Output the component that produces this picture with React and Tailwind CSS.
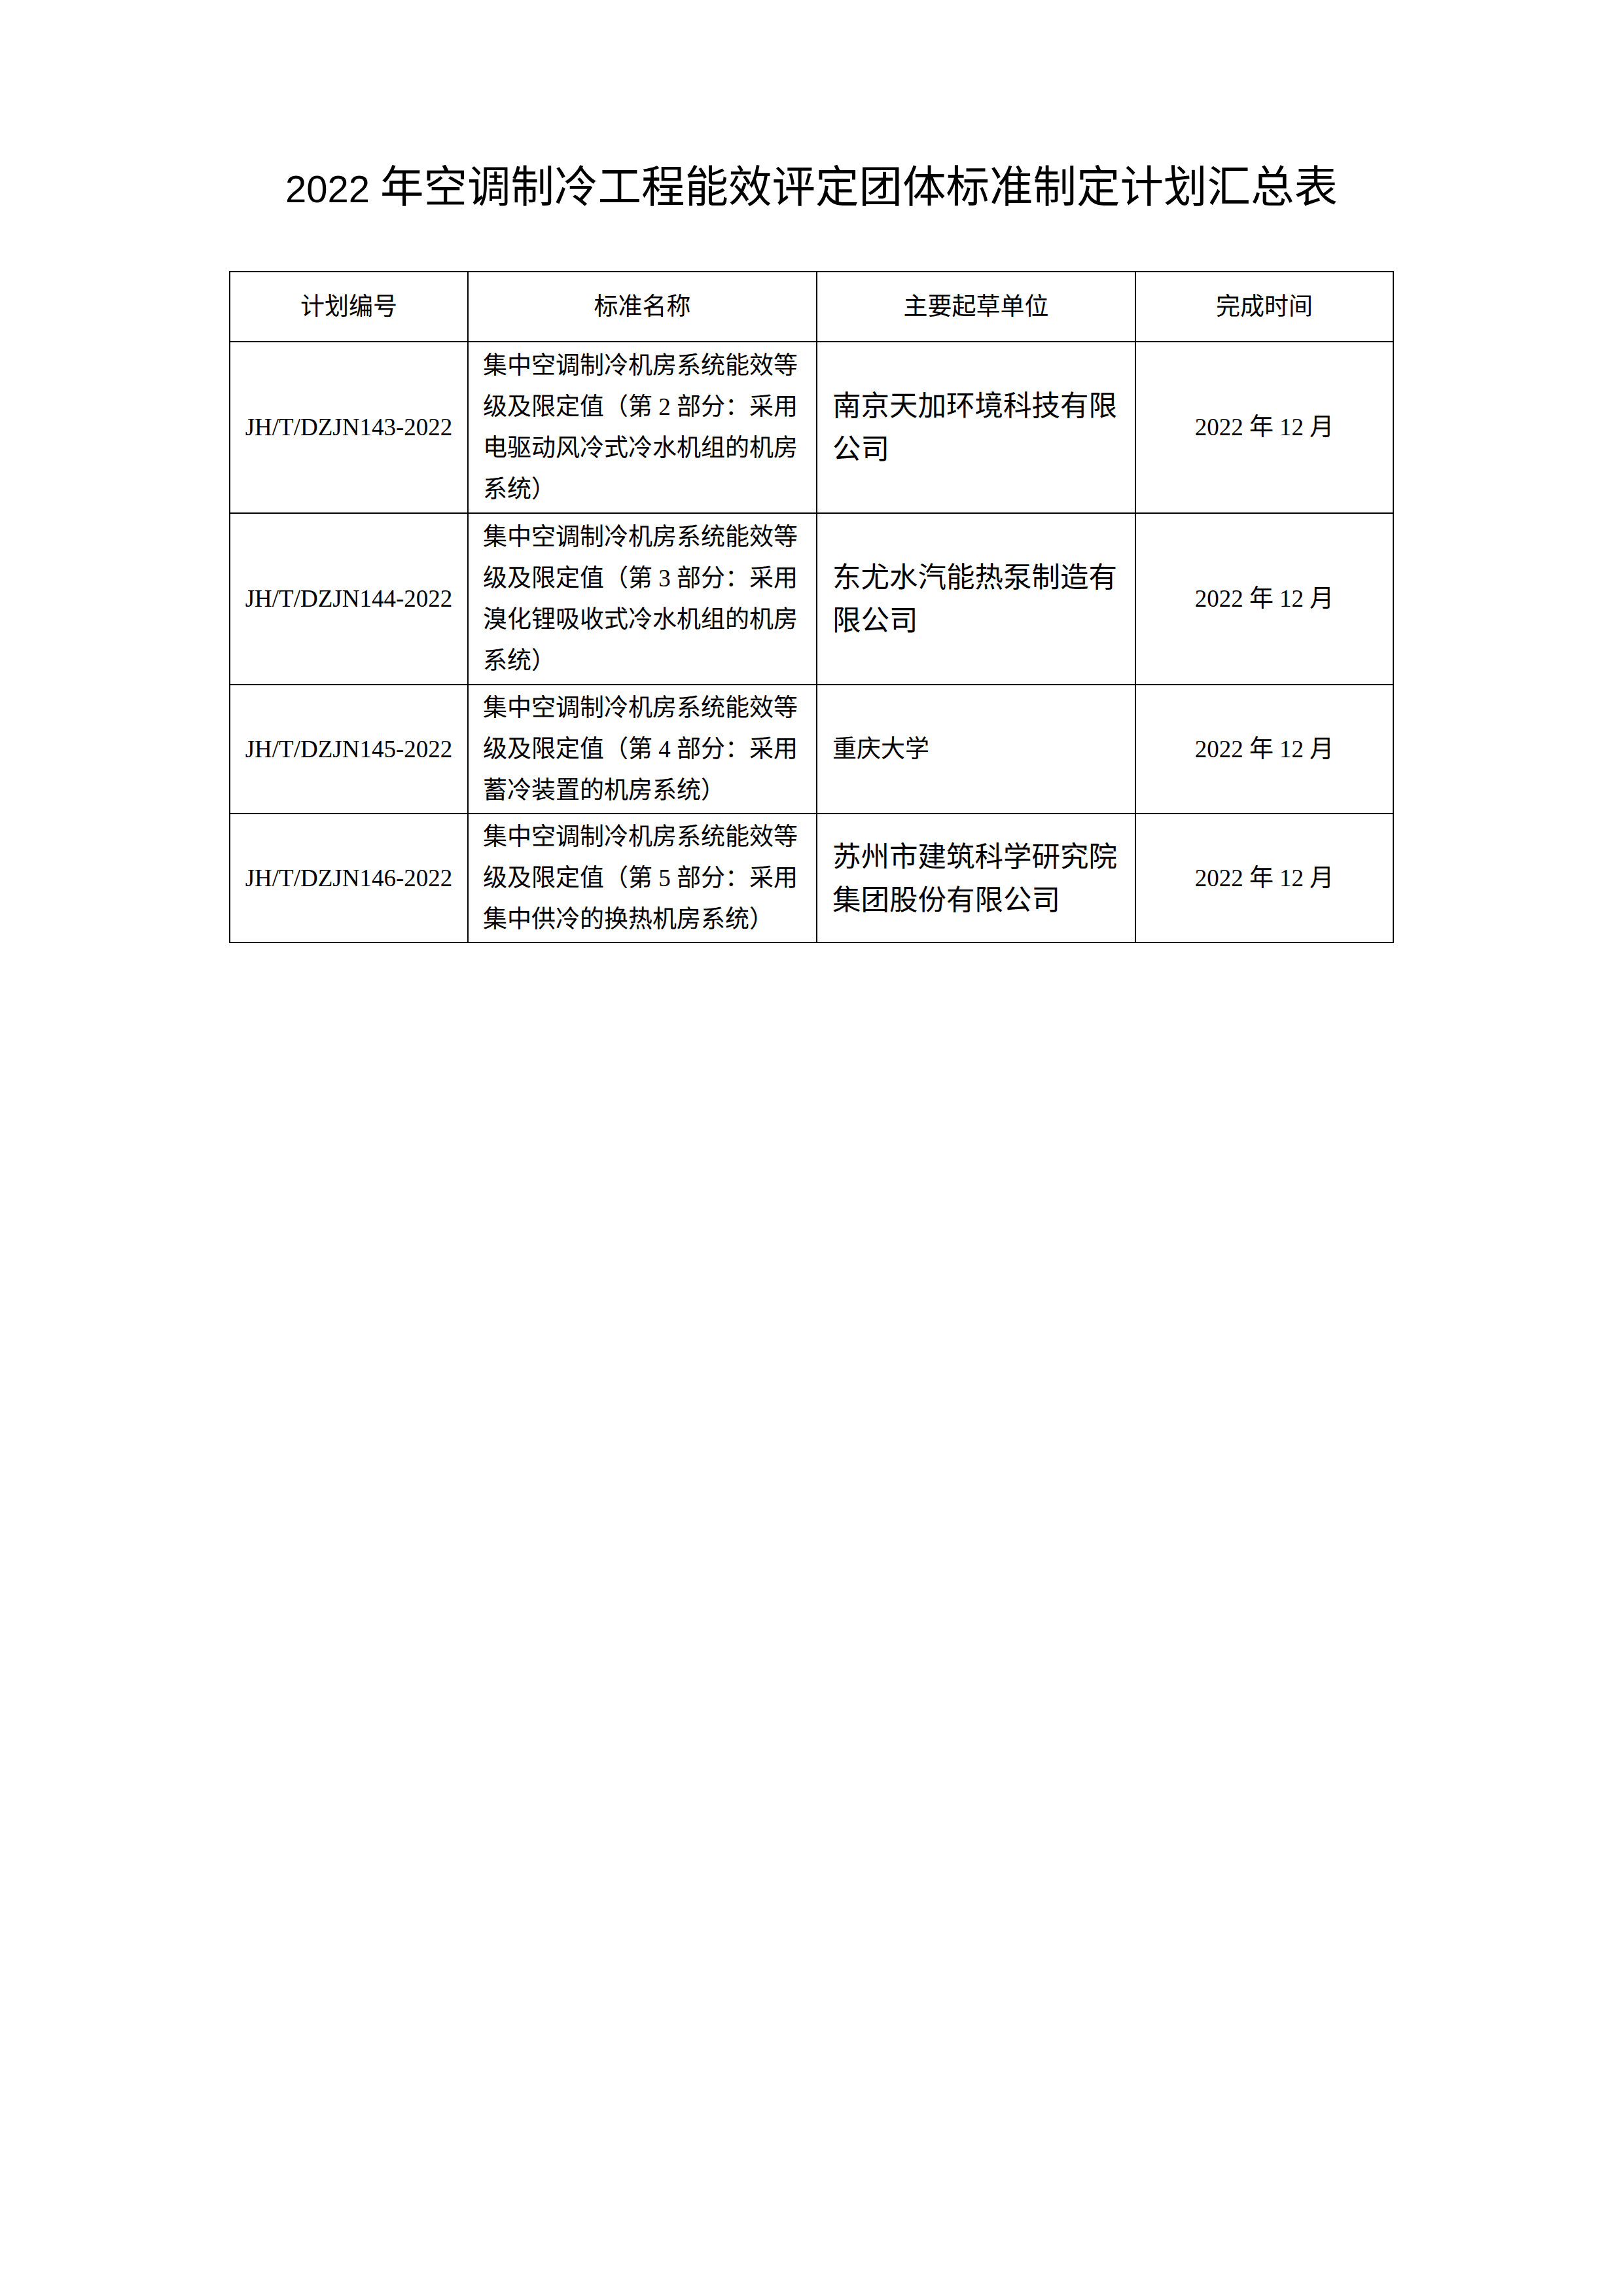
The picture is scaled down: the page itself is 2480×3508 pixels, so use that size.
const rows = [
  {
    code: 'JH/T/DZJN143-2022',
    name: ['集中空调制冷机房系统能效等', '级及限定值（第 2 部分：采用', '电驱动风冷式冷水机组的机房', '系统）'],
    org: ['南京天加环境科技有限', '公司'],
    big: true,
    tall: true,
  },
  {
    code: 'JH/T/DZJN144-2022',
    name: ['集中空调制冷机房系统能效等', '级及限定值（第 3 部分：采用', '溴化锂吸收式冷水机组的机房', '系统）'],
    org: ['东尤水汽能热泵制造有', '限公司'],
    big: true,
    tall: true,
  },
  {
    code: 'JH/T/DZJN145-2022',
    name: ['集中空调制冷机房系统能效等', '级及限定值（第 4 部分：采用', '蓄冷装置的机房系统）'],
    org: ['重庆大学'],
    big: false,
    tall: false,
  },
  {
    code: 'JH/T/DZJN146-2022',
    name: ['集中空调制冷机房系统能效等', '级及限定值（第 5 部分：采用', '集中供冷的换热机房系统）'],
    org: ['苏州市建筑科学研究院', '集团股份有限公司'],
    big: true,
    tall: false,
  },
]

const bodyFont = "font-['Liberation_Serif','Noto_Sans_CJK_SC',serif]"

export default function App() {
  return (
    <div className="min-h-[3508px] w-[2480px] bg-white pt-[245px] text-black">
      {/* Title */}
      <div className="h-[70px] text-center font-['Noto_Sans_CJK_SC',sans-serif] text-[66.5px] leading-[70px]">
        <span className="font-['Liberation_Sans',sans-serif] text-[58px] leading-none">2022 </span>
        年空调制冷工程能效评定团体标准制定计划汇总表
      </div>

      {/* Table */}
      <table className={`mx-auto mt-[99px] w-[1778px] table-fixed border-collapse ${bodyFont} text-[37px]`}>
        <colgroup>
          <col className="w-[364px]" />
          <col className="w-[533px]" />
          <col className="w-[487px]" />
          <col className="w-[394px]" />
        </colgroup>
        <thead>
          <tr className="h-[107px]">
            <th className="border-2 border-black text-center font-normal">计划编号</th>
            <th className="border-2 border-black text-center font-normal">标准名称</th>
            <th className="border-2 border-black text-center font-normal">主要起草单位</th>
            <th className="border-2 border-black text-center font-normal">完成时间</th>
          </tr>
        </thead>
        <tbody>
          {rows.map(row => (
            <tr key={row.code} className={row.tall ? 'h-[262px]' : 'h-[197px]'}>
              <td className="border-2 border-black text-center align-middle whitespace-nowrap">{row.code}</td>
              <td className="border-2 border-black px-[22px] py-[3px] align-middle">
                {row.name.map(line => (
                  <div key={line} className="whitespace-nowrap leading-[63px]">{line}</div>
                ))}
              </td>
              <td className="border-2 border-black px-[23px] align-middle">
                {row.org.map(line => (
                  <div
                    key={line}
                    className={row.big ? 'whitespace-nowrap text-[43.5px] leading-[66px]' : 'whitespace-nowrap leading-[63px]'}
                  >
                    {line}
                  </div>
                ))}
              </td>
              <td className="border-2 border-black text-center align-middle whitespace-nowrap">2022 年 12 月</td>
            </tr>
          ))}
        </tbody>
      </table>
    </div>
  )
}
